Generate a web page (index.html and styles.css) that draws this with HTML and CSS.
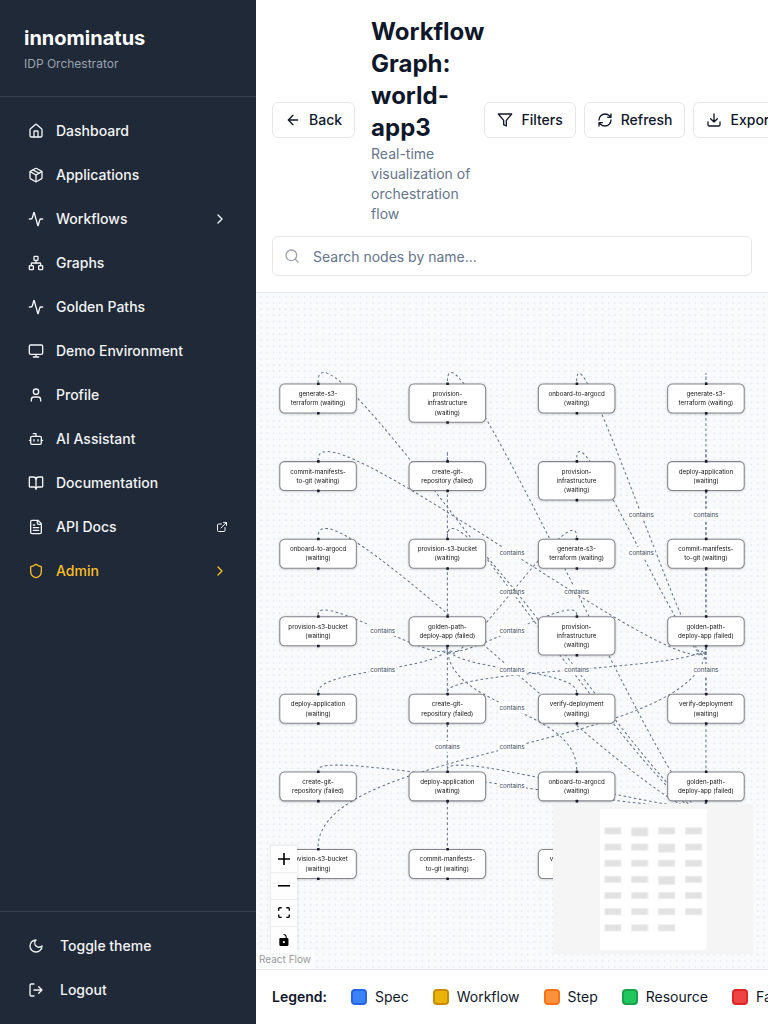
FILE: index.html
```html
<!DOCTYPE html>
<html lang="en">
<head>
<meta charset="utf-8">
<meta name="viewport" content="width=device-width, initial-scale=1">
<title>innominatus - Workflow Graph</title>
<link rel="stylesheet" href="styles.css">
</head>
<body>
<div class="app">
  <aside class="sidebar">
    <div class="brand">
      <div class="brand-name">innominatus</div>
      <div class="brand-sub">IDP Orchestrator</div>
    </div>
    <nav class="nav">
      <a class="nav-item" href="#"><svg class="icon" viewBox="0 0 24 24"><path d="M15 21v-8a1 1 0 0 0-1-1h-4a1 1 0 0 0-1 1v8"/><path d="M3 10a2 2 0 0 1 .709-1.528l7-5.999a2 2 0 0 1 2.582 0l7 5.999A2 2 0 0 1 21 10v9a2 2 0 0 1-2 2H5a2 2 0 0 1-2-2z"/></svg><span>Dashboard</span></a>
      <a class="nav-item" href="#"><svg class="icon" viewBox="0 0 24 24"><path d="M11 21.73a2 2 0 0 0 2 0l7-4A2 2 0 0 0 21 16V8a2 2 0 0 0-1-1.73l-7-4a2 2 0 0 0-2 0l-7 4A2 2 0 0 0 3 8v8a2 2 0 0 0 1 1.73z"/><path d="M12 22V12"/><path d="m3.3 7 8.7 5 8.7-5"/><path d="m7.5 4.27 9 5.15"/></svg><span>Applications</span></a>
      <button class="nav-item" type="button"><svg class="icon" viewBox="0 0 24 24"><path d="M22 12h-2.48a2 2 0 0 0-1.93 1.46l-2.35 8.36a.25.25 0 0 1-.48 0L9.24 2.18a.25.25 0 0 0-.48 0l-2.35 8.36A2 2 0 0 1 4.49 12H2"/></svg><span>Workflows</span><svg class="icon trail" viewBox="0 0 24 24"><path d="m9 18 6-6-6-6"/></svg></button>
      <a class="nav-item" href="#"><svg class="icon" viewBox="0 0 24 24"><rect x="16" y="16" width="6" height="6" rx="1"/><rect x="2" y="16" width="6" height="6" rx="1"/><rect x="9" y="2" width="6" height="6" rx="1"/><path d="M5 16v-3a1 1 0 0 1 1-1h12a1 1 0 0 1 1 1v3"/><path d="M12 12V8"/></svg><span>Graphs</span></a>
      <a class="nav-item" href="#"><svg class="icon" viewBox="0 0 24 24"><path d="M22 12h-2.48a2 2 0 0 0-1.93 1.46l-2.35 8.36a.25.25 0 0 1-.48 0L9.24 2.18a.25.25 0 0 0-.48 0l-2.35 8.36A2 2 0 0 1 4.49 12H2"/></svg><span>Golden Paths</span></a>
      <a class="nav-item" href="#"><svg class="icon" viewBox="0 0 24 24"><rect x="2" y="3" width="20" height="14" rx="2"/><path d="M8 21h8M12 17v4"/></svg><span>Demo Environment</span></a>
      <a class="nav-item" href="#"><svg class="icon" viewBox="0 0 24 24"><path d="M19 21v-2a4 4 0 0 0-4-4H9a4 4 0 0 0-4 4v2"/><circle cx="12" cy="7" r="4"/></svg><span>Profile</span></a>
      <a class="nav-item" href="#"><svg class="icon" viewBox="0 0 24 24"><path d="M12 8V4H8"/><rect x="4" y="8" width="16" height="12" rx="2"/><path d="M2 14h2M20 14h2M15 13v2M9 13v2"/></svg><span>AI Assistant</span></a>
      <a class="nav-item" href="#"><svg class="icon" viewBox="0 0 24 24"><path d="M12 7v14"/><path d="M3 18a1 1 0 0 1-1-1V4a1 1 0 0 1 1-1h5a4 4 0 0 1 4 4 4 4 0 0 1 4-4h5a1 1 0 0 1 1 1v13a1 1 0 0 1-1 1h-6a3 3 0 0 0-3 3 3 3 0 0 0-3-3z"/></svg><span>Documentation</span></a>
      <a class="nav-item" href="#"><svg class="icon" viewBox="0 0 24 24"><path d="M15 2H6a2 2 0 0 0-2 2v16a2 2 0 0 0 2 2h12a2 2 0 0 0 2-2V7z"/><path d="M14 2v4a2 2 0 0 0 2 2h4M10 9H8M16 13H8M16 17H8"/></svg><span>API Docs</span><svg class="icon icon-small trail" viewBox="0 0 24 24"><path d="M15 3h6v6M10 14 21 3M18 13v6a2 2 0 0 1-2 2H5a2 2 0 0 1-2-2V8a2 2 0 0 1 2-2h6"/></svg></a>
      <button class="nav-item nav-admin" type="button"><svg class="icon" viewBox="0 0 24 24"><path d="M20 13c0 5-3.500 7.500-7.660 8.950a1 1 0 0 1-.67-.01C7.500 20.500 4 18 4 13V6a1 1 0 0 1 1-1c2 0 4.500-1.200 6.240-2.720a1.170 1.170 0 0 1 1.520 0C14.510 3.810 17 5 19 5a1 1 0 0 1 1 1z"/></svg><span>Admin</span><svg class="icon trail" viewBox="0 0 24 24"><path d="m9 18 6-6-6-6"/></svg></button>
    </nav>
    <div class="sidebar-foot">
      <button class="nav-item" type="button"><svg class="icon" viewBox="0 0 24 24"><path d="M12 3a6 6 0 0 0 9 9 9 9 0 1 1-9-9Z"/></svg><span>Toggle theme</span></button>
      <button class="nav-item" type="button"><svg class="icon" viewBox="0 0 24 24"><path d="M9 21H5a2 2 0 0 1-2-2V5a2 2 0 0 1 2-2h4M16 17l5-5-5-5M21 12H9"/></svg><span>Logout</span></button>
    </div>
  </aside>

  <main class="main">
    <header class="header">
      <div class="header-row">
        <div class="header-left">
          <button class="btn" type="button"><svg class="icon" viewBox="0 0 24 24"><path d="m12 19-7-7 7-7M19 12H5"/></svg>Back</button>
          <div class="heading">
            <h1>Workflow Graph: world-app3</h1>
            <p>Real-time visualization of orchestration flow</p>
          </div>
        </div>
        <div class="actions">
          <button class="btn" type="button"><svg class="icon" viewBox="0 0 24 24"><path d="M22 3H2l8 9.460V19l4 2v-8.540z"/></svg>Filters</button>
          <button class="btn" type="button"><svg class="icon" viewBox="0 0 24 24"><path d="M3 12a9 9 0 0 1 9-9 9.750 9.750 0 0 1 6.740 2.740L21 8M21 3v5h-5M21 12a9 9 0 0 1-9 9 9.750 9.750 0 0 1-6.740-2.740L3 16M8 16H3v5"/></svg>Refresh</button>
          <button class="btn" type="button"><svg class="icon" viewBox="0 0 24 24"><path d="M21 15v4a2 2 0 0 1-2 2H5a2 2 0 0 1-2-2v-4M7 10l5 5 5-5M12 15V3"/></svg>Export</button>
        </div>
      </div>
      <label class="search">
        <svg class="icon" viewBox="0 0 24 24"><circle cx="11" cy="11" r="8"/><path d="m21 21-4.300-4.300"/></svg>
        <input type="text" placeholder="Search nodes by name..." aria-label="Search nodes by name">
      </label>
    </header>

    <section class="flow" aria-label="Workflow graph">
      <svg class="graph" viewBox="0 0 990 1307">
        <defs>
          <pattern id="dots" width="12" height="12" patternUnits="userSpaceOnUse"><circle class="dot" cx="10" cy="7" r="1"/></pattern>
          <g id="card2"><rect class="card" x="1" y="1" width="148" height="56" rx="9"/><rect class="handle" x="73" y="-2" width="5" height="5" rx="1"/><rect class="handle" x="73" y="55" width="5" height="5" rx="1"/></g>
          <g id="card3"><rect class="card" x="1" y="1" width="148" height="74" rx="9"/><rect class="handle" x="73" y="-2" width="5" height="5" rx="1"/><rect class="handle" x="73" y="73" width="5" height="5" rx="1"/></g>
          <rect id="tag" class="tag" x="-27" y="-11" width="54" height="22" rx="2"/>
        </defs>
        <rect x="-3000" y="-3000" width="9000" height="9000" fill="url(#dots)"/>

        <g class="edges">
          <path d="M870 984C870 1162 120 -6 120 172"/>
          <path d="M870 984C870 1162 370 -6 370 172"/>
        </g>
        <g class="labels">
          <g transform="translate(495 577)"><use href="#tag"/><text>contains</text></g>
          <g transform="translate(620 577)"><use href="#tag"/><text>contains</text></g>
        </g>
        <g class="edges">
          <path d="M870 984C870 1125 120 331 120 472"/>
          <path d="M870 984C870 1032 120 874 120 922"/>
          <path d="M870 984C870 1125 370 331 370 472"/>
          <path d="M870 984C870 1032 370 874 370 922"/>
          <path d="M870 984C870 1030 620 1026 620 1072"/>
          <path d="M870 984C870 1144 870 162 870 322"/>
          <path d="M870 684C870 802 120 204 120 322"/>
          <path d="M870 684C870 880 120 876 120 1072"/>
          <path d="M870 684C870 730 370 726 370 772"/>
          <path d="M870 684C870 825 620 31 620 172"/>
          <path d="M870 684C870 802 620 204 620 322"/>
          <path d="M870 684C870 825 870 31 870 172"/>
          <path d="M870 684C870 730 870 726 870 772"/>
          <path d="M370 684C370 732 120 574 120 622"/>
          <path d="M370 684C370 730 120 726 120 772"/>
          <path d="M370 684C370 802 370 204 370 322"/>
          <path d="M370 684C370 880 370 876 370 1072"/>
          <path d="M370 684C370 774 620 382 620 472"/>
          <path d="M370 684C370 732 620 574 620 622"/>
          <path d="M370 684C370 730 620 726 620 772"/>
          <path d="M370 684C370 805 620 801 620 922"/>
        </g>

        <g class="labels">
          <g transform="translate(495 502)"><use href="#tag"/><text>contains</text></g>
          <g transform="translate(745 428)"><use href="#tag"/><text>contains</text></g>
          <g transform="translate(870 428)"><use href="#tag"/><text>contains</text></g>
          <g transform="translate(745 502)"><use href="#tag"/><text>contains</text></g>
          <g transform="translate(245 652)"><use href="#tag"/><text>contains</text></g>
          <g transform="translate(495 652)"><use href="#tag"/><text>contains</text></g>
          <g transform="translate(245 728)"><use href="#tag"/><text>contains</text></g>
          <g transform="translate(495 728)"><use href="#tag"/><text>contains</text></g>
          <g transform="translate(620 728)"><use href="#tag"/><text>contains</text></g>
          <g transform="translate(870 728)"><use href="#tag"/><text>contains</text></g>
          <g transform="translate(495 802)"><use href="#tag"/><text>contains</text></g>
          <g transform="translate(370 877)"><use href="#tag"/><text>contains</text></g>
          <g transform="translate(495 877)"><use href="#tag"/><text>contains</text></g>
          <g transform="translate(495 952)"><use href="#tag"/><text>contains</text></g>
        </g>

        <g class="nodes">
          <g transform="translate(45 175)"><use href="#card2"/><text><tspan x="75" y="24">generate-s3-</tspan><tspan x="75" y="42">terraform (waiting)</tspan></text></g>
          <g transform="translate(295 175)"><use href="#card3"/><text><tspan x="75" y="24">provision-</tspan><tspan x="75" y="42">infrastructure</tspan><tspan x="75" y="60">(waiting)</tspan></text></g>
          <g transform="translate(545 175)"><use href="#card2"/><text><tspan x="75" y="24">onboard-to-argocd</tspan><tspan x="75" y="42">(waiting)</tspan></text></g>
          <g transform="translate(795 175)"><use href="#card2"/><text><tspan x="75" y="24">generate-s3-</tspan><tspan x="75" y="42">terraform (waiting)</tspan></text></g>

          <g transform="translate(45 325)"><use href="#card2"/><text><tspan x="75" y="24">commit-manifests-</tspan><tspan x="75" y="42">to-git (waiting)</tspan></text></g>
          <g transform="translate(295 325)"><use href="#card2"/><text><tspan x="75" y="24">create-git-</tspan><tspan x="75" y="42">repository (failed)</tspan></text></g>
          <g transform="translate(545 325)"><use href="#card3"/><text><tspan x="75" y="24">provision-</tspan><tspan x="75" y="42">infrastructure</tspan><tspan x="75" y="60">(waiting)</tspan></text></g>
          <g transform="translate(795 325)"><use href="#card2"/><text><tspan x="75" y="24">deploy-application</tspan><tspan x="75" y="42">(waiting)</tspan></text></g>

          <g transform="translate(45 475)"><use href="#card2"/><text><tspan x="75" y="24">onboard-to-argocd</tspan><tspan x="75" y="42">(waiting)</tspan></text></g>
          <g transform="translate(295 475)"><use href="#card2"/><text><tspan x="75" y="24">provision-s3-bucket</tspan><tspan x="75" y="42">(waiting)</tspan></text></g>
          <g transform="translate(545 475)"><use href="#card2"/><text><tspan x="75" y="24">generate-s3-</tspan><tspan x="75" y="42">terraform (waiting)</tspan></text></g>
          <g transform="translate(795 475)"><use href="#card2"/><text><tspan x="75" y="24">commit-manifests-</tspan><tspan x="75" y="42">to-git (waiting)</tspan></text></g>

          <g transform="translate(45 625)"><use href="#card2"/><text><tspan x="75" y="24">provision-s3-bucket</tspan><tspan x="75" y="42">(waiting)</tspan></text></g>
          <g transform="translate(295 625)"><use href="#card2"/><text><tspan x="75" y="24">golden-path-</tspan><tspan x="75" y="42">deploy-app (failed)</tspan></text></g>
          <g transform="translate(545 625)"><use href="#card3"/><text><tspan x="75" y="24">provision-</tspan><tspan x="75" y="42">infrastructure</tspan><tspan x="75" y="60">(waiting)</tspan></text></g>
          <g transform="translate(795 625)"><use href="#card2"/><text><tspan x="75" y="24">golden-path-</tspan><tspan x="75" y="42">deploy-app (failed)</tspan></text></g>

          <g transform="translate(45 775)"><use href="#card2"/><text><tspan x="75" y="24">deploy-application</tspan><tspan x="75" y="42">(waiting)</tspan></text></g>
          <g transform="translate(295 775)"><use href="#card2"/><text><tspan x="75" y="24">create-git-</tspan><tspan x="75" y="42">repository (failed)</tspan></text></g>
          <g transform="translate(545 775)"><use href="#card2"/><text><tspan x="75" y="24">verify-deployment</tspan><tspan x="75" y="42">(waiting)</tspan></text></g>
          <g transform="translate(795 775)"><use href="#card2"/><text><tspan x="75" y="24">verify-deployment</tspan><tspan x="75" y="42">(waiting)</tspan></text></g>

          <g transform="translate(45 925)"><use href="#card2"/><text><tspan x="75" y="24">create-git-</tspan><tspan x="75" y="42">repository (failed)</tspan></text></g>
          <g transform="translate(295 925)"><use href="#card2"/><text><tspan x="75" y="24">deploy-application</tspan><tspan x="75" y="42">(waiting)</tspan></text></g>
          <g transform="translate(545 925)"><use href="#card2"/><text><tspan x="75" y="24">onboard-to-argocd</tspan><tspan x="75" y="42">(waiting)</tspan></text></g>
          <g transform="translate(795 925)"><use href="#card2"/><text><tspan x="75" y="24">golden-path-</tspan><tspan x="75" y="42">deploy-app (failed)</tspan></text></g>

          <g transform="translate(45 1075)"><use href="#card2"/><text><tspan x="75" y="24">provision-s3-bucket</tspan><tspan x="75" y="42">(waiting)</tspan></text></g>
          <g transform="translate(295 1075)"><use href="#card2"/><text><tspan x="75" y="24">commit-manifests-</tspan><tspan x="75" y="42">to-git (waiting)</tspan></text></g>
          <g transform="translate(545 1075)"><use href="#card2"/><text><tspan x="75" y="24">verify-deployment</tspan><tspan x="75" y="42">(waiting)</tspan></text></g>
        </g>
      </svg>

      <div class="controls">
        <button type="button" aria-label="Zoom in"><svg viewBox="0 0 32 32"><path d="M32 18.133H18.133V32h-4.266V18.133H0v-4.266h13.867V0h4.266v13.867H32z"/></svg></button>
        <button type="button" aria-label="Zoom out"><svg viewBox="0 0 32 5"><path d="M0 0h32v4.200H0z"/></svg></button>
        <button type="button" aria-label="Fit view"><svg viewBox="0 0 32 30"><path d="M3.692 4.630c0-.53.4-.938.939-.938h5.215V0H4.708C2.130 0 0 2.054 0 4.630v5.216h3.692V4.631zM27.354 0h-5.200v3.692h5.170c.53 0 .984.4.984.939v5.215H32V4.631A4.624 4.624 0 0027.354 0zm.954 24.830c0 .532-.4.940-.939.940h-5.215v3.768h5.215c2.577 0 4.631-2.130 4.631-4.707v-5.139h-3.692v5.139zm-23.677.940c-.531 0-.939-.4-.939-.940v-5.138H0v5.139c0 2.577 2.130 4.707 4.708 4.707h5.138V25.770H4.631z"/></svg></button>
        <button type="button" aria-label="Toggle interactivity"><svg viewBox="0 0 25 32"><path d="M21.333 10.667H19.810V7.619C19.810 3.429 16.380 0 12.190 0c-4.114 1.828-1.370 2.133.305 2.438 1.676.305 4.420 2.590 4.420 5.181v3.048H3.047A3.056 3.056 0 000 13.714v15.238A3.056 3.056 0 003.048 32h18.285a3.056 3.056 0 003.048-3.048V13.714a3.056 3.056 0 00-3.048-3.047zM12.190 24.533a3.056 3.056 0 01-3.047-3.047 3.056 3.056 0 013.047-3.048 3.056 3.056 0 013.048 3.048 3.056 3.056 0 01-3.048 3.047z"/></svg></button>
      </div>

      <svg class="minimap" viewBox="-436 -46 1857 1393" role="img" aria-label="Mini map">
        <defs>
          <rect id="m2" class="mini" width="150" height="58"/>
          <rect id="m3" class="mini" width="150" height="76"/>
        </defs>
        <rect class="mini-view" width="990" height="1307"/>
        <use href="#m2" x="45" y="175"/><use href="#m3" x="295" y="175"/><use href="#m2" x="545" y="175"/><use href="#m2" x="795" y="175"/>
        <use href="#m2" x="45" y="325"/><use href="#m2" x="295" y="325"/><use href="#m3" x="545" y="325"/><use href="#m2" x="795" y="325"/>
        <use href="#m2" x="45" y="475"/><use href="#m2" x="295" y="475"/><use href="#m2" x="545" y="475"/><use href="#m2" x="795" y="475"/>
        <use href="#m2" x="45" y="625"/><use href="#m2" x="295" y="625"/><use href="#m3" x="545" y="625"/><use href="#m2" x="795" y="625"/>
        <use href="#m2" x="45" y="775"/><use href="#m2" x="295" y="775"/><use href="#m2" x="545" y="775"/><use href="#m2" x="795" y="775"/>
        <use href="#m2" x="45" y="925"/><use href="#m2" x="295" y="925"/><use href="#m2" x="545" y="925"/><use href="#m2" x="795" y="925"/>
        <use href="#m2" x="45" y="1075"/><use href="#m2" x="295" y="1075"/><use href="#m2" x="545" y="1075"/>
      </svg>
      <a class="attribution" href="#">React Flow</a>
    </section>

    <footer class="legend">
      <span class="legend-title">Legend:</span>
      <span class="legend-item"><i class="swatch spec"></i>Spec</span>
      <span class="legend-item"><i class="swatch workflow"></i>Workflow</span>
      <span class="legend-item"><i class="swatch step"></i>Step</span>
      <span class="legend-item"><i class="swatch resource"></i>Resource</span>
      <span class="legend-item"><i class="swatch failed"></i>Failed</span>
    </footer>
  </main>
</div>
</body>
</html>
```
FILE: styles.css
```css
*, *::before, *::after { box-sizing: border-box; }
body {
  margin: 0;
  font-family: Inter, "Liberation Sans", sans-serif;
  font-size: 14px;
  line-height: 20px;
  color: #0f172a;
  background: #fff;
}
h1, p { margin: 0; }
button, input { font: inherit; color: inherit; }
a { color: inherit; text-decoration: none; }
.app { display: flex; height: 100vh; overflow: hidden; }
.icon {
  width: 16px;
  height: 16px;
  flex: none;
  fill: none;
  stroke: currentColor;
  stroke-width: 2;
  stroke-linecap: round;
  stroke-linejoin: round;
}
.icon-small { width: 12px; height: 12px; }

.sidebar {
  width: 256px;
  flex: none;
  display: flex;
  flex-direction: column;
  background: #1f2937;
  color: #f3f4f6;
}
.brand { padding: 24px; border-bottom: 1px solid #374151; }
.brand-name { font-size: 20px; line-height: 28px; font-weight: 700; color: #fff; }
.brand-sub { margin-top: 4px; font-size: 12px; line-height: 16px; color: #9ca3af; }
.nav {
  flex: 1;
  display: flex;
  flex-direction: column;
  gap: 8px;
  padding: 16px;
}
.nav-item {
  display: flex;
  align-items: center;
  gap: 12px;
  width: 100%;
  height: 36px;
  padding: 0 12px;
  border: 0;
  border-radius: 6px;
  background: none;
  font-weight: 500;
  text-align: left;
}
.trail { margin-left: auto; }
.nav-admin { color: #fbbf24; }
.sidebar-foot {
  display: flex;
  flex-direction: column;
  gap: 8px;
  padding: 16px;
  border-top: 1px solid #374151;
}
.sidebar-foot .nav-item { gap: 16px; }

.main { flex: 1; min-width: 0; display: flex; flex-direction: column; overflow: hidden; }
.header {
  display: flex;
  flex-direction: column;
  gap: 12px;
  padding: 16px;
  border-bottom: 1px solid #e5e7eb;
}
.header-row { display: flex; align-items: center; justify-content: space-between; }
.header-left { display: flex; align-items: center; gap: 16px; }
.heading h1 { font-size: 24px; line-height: 32px; font-weight: 700; }
.heading p { color: #64748b; }
.actions { display: flex; gap: 8px; flex: none; }
.btn {
  display: flex;
  align-items: center;
  flex: none;
  gap: 8px;
  height: 36px;
  padding: 0 12px;
  border: 1px solid #e5e7eb;
  border-radius: 6px;
  background: #fff;
  font-weight: 500;
}
.search {
  display: flex;
  align-items: center;
  gap: 13px;
  height: 40px;
  padding: 0 11px;
  border: 1px solid #e5e7eb;
  border-radius: 6px;
}
.search .icon { color: #9ca3af; }
.search input { flex: 1; min-width: 0; padding: 2px 0 0; border: 0; outline: 0; background: none; }
.search input::placeholder { color: #64748b; opacity: 1; }

.flow { position: relative; flex: 1; min-height: 0; background: #f8fafc; }
.graph { display: block; width: 100%; height: 100%; }
.dot { fill: #c4c9d0; }
.edges path { fill: none; stroke: #64748b; stroke-width: 2; stroke-dasharray: 5 5; }
.tag { fill: #fff; fill-opacity: 0.9; }
.labels text { font-size: 12px; fill: #334155; text-anchor: middle; dominant-baseline: central; }
.nodes > g { filter: drop-shadow(0 1px 2px rgba(0, 0, 0, 0.2)); }
.nodes text { font-size: 12px; fill: #111; text-anchor: middle; }
.card { fill: #fff; stroke: #85858d; stroke-width: 2; }
.handle { fill: #1a192b; }

.controls {
  position: absolute;
  left: 15px;
  bottom: 15px;
  box-shadow: 0 0 2px 1px rgba(0, 0, 0, 0.08);
}
.controls button {
  display: flex;
  align-items: center;
  justify-content: center;
  width: 26px;
  height: 27px;
  padding: 0;
  border: 0;
  border-bottom: 1px solid #eee;
  background: #fefefe;
}
.controls svg { width: 12px; max-height: 12px; fill: #000; }
.minimap { position: absolute; right: 15px; bottom: 15px; width: 200px; height: 150px; background: #f5f5f5; }
.mini-view { fill: #fff; }
.mini { fill: #e2e2e2; stroke: #eee; stroke-width: 10; }
.attribution {
  position: absolute;
  left: 0;
  bottom: 0;
  padding: 2px 3px;
  font-size: 10px;
  line-height: 15px;
  color: #999;
  background: rgba(255, 255, 255, 0.5);
}

.legend {
  display: flex;
  align-items: center;
  gap: 24px;
  padding: 17px 16px;
  border-top: 1px solid #e5e7eb;
  white-space: nowrap;
}
.legend-title { font-weight: 600; }
.legend-item { display: flex; align-items: center; gap: 8px; }
.swatch { width: 16px; height: 16px; border: 2px solid; border-radius: 4px; }
.spec { background: #3b82f6; border-color: #2563eb; }
.workflow { background: #eab308; border-color: #ca8a04; }
.step { background: #fb923c; border-color: #f97316; }
.resource { background: #22c55e; border-color: #16a34a; }
.failed { background: #ef4444; border-color: #dc2626; }
```
